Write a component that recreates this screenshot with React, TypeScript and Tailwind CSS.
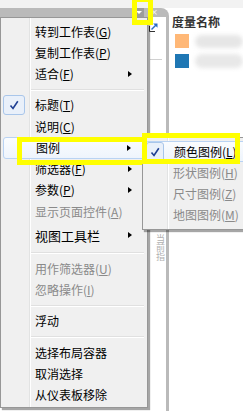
type Item = {
  label?: string;
  k?: string;
  disabled?: boolean;
  arrow?: boolean;
  checked?: boolean;
  hover?: boolean;
  big?: boolean;
  sep?: boolean;
};

const mainItems: Item[] = [
  { label: "转到工作表", k: "G" },
  { label: "复制工作表", k: "P" },
  { label: "适合", k: "F", arrow: true },
  { sep: true },
  { label: "标题", k: "T", checked: true },
  { label: "说明", k: "C" },
  { label: "图例", arrow: true, hover: true },
  { label: "筛选器", k: "F", arrow: true },
  { label: "参数", k: "P", arrow: true },
  { label: "显示页面控件", k: "A", disabled: true },
  { label: "视图工具栏", arrow: true, big: true },
  { sep: true },
  { label: "用作筛选器", k: "U", disabled: true },
  { label: "忽略操作", k: "I", disabled: true },
  { sep: true },
  { label: "浮动" },
  { sep: true },
  { label: "选择布局容器" },
  { label: "取消选择" },
  { label: "从仪表板移除" },
];

const subItems: Item[] = [
  { label: "颜色图例", k: "L", checked: true, hover: true },
  { label: "形状图例", k: "H", disabled: true },
  { label: "尺寸图例", k: "Z", disabled: true },
  { label: "地图图例", k: "M", disabled: true },
];

const Check = () => (
  <svg width="10" height="10" viewBox="0 0 10 10">
    <path d="M1.5 5.5 L4 8.5 L8.8 1.2" fill="none" stroke="#1f3f93" strokeWidth="1.6" />
  </svg>
);

const Label = ({ item }: { item: Item }) => (
  <span className={`leading-none whitespace-nowrap ${item.big ? "text-[13px]" : "text-[12px]"}`}>
    {item.label}
    {item.k && (
      <>
        (<u>{item.k}</u>)
      </>
    )}
  </span>
);

const Row = ({ item, gutter, box }: { item: Item; gutter: string; box: string }) => (
  <div
    className={`flex items-center ${item.big ? "h-[26px]" : "h-[21.25px]"} ${
      item.disabled ? "text-[#8a8a8a]" : "text-black"
    } ${item.hover ? "rounded-[3px] border border-[#b9d3f3] bg-[linear-gradient(#fafcfe,#eef4fc)]" : ""}`}
  >
    <div className={`${gutter} h-full flex items-center`}>
      {item.checked && (
        <div className={`${box} h-[20px] rounded-[3px] border border-[#a9c6ea] bg-[#e9f0fa] flex items-center justify-center`}>
          <Check />
        </div>
      )}
    </div>
    <div className="flex-1 flex items-center">
      <Label item={item} />
    </div>
    {item.arrow && (
      <div className="mr-[13px] w-0 h-0 border-y-[3.5px] border-y-transparent border-l-[4px] border-l-black" />
    )}
  </div>
);

const Sep = ({ pl }: { pl: string }) => (
  <div className={`h-[10px] flex items-center ${pl} pr-[1px]`}>
    <div className="flex-1 h-[2px] border-t border-t-[#e0e0e0] border-b border-b-white" />
  </div>
);

export default function App() {
  return (
    <div className="relative w-[243px] h-[411px] overflow-hidden bg-white font-['Noto_Sans_CJK_SC',sans-serif]">
      <div className="h-[8px] bg-[#f2f2f2]" />
      <div className="flex h-[403px]">
        <div className="w-[170px] flex flex-col">
          <div className="h-[9px] bg-[#bababa] rounded-tr-[8px] flex items-center justify-end pr-[11px] gap-[6px]">
            <div className="w-[11px] h-[9px] bg-[#9c9c9c] flex items-center justify-center">
              <div className="w-0 h-0 border-x-[3px] border-x-transparent border-t-[3px] border-t-white" />
            </div>
            <span className="text-[9px] leading-none text-[#f4f4f4] font-['DejaVu_Sans',sans-serif]">×</span>
          </div>
          <div className="flex-1 flex">
            <div className="flex-1 bg-white flex">
              <div className="w-[148px]" />
              <div className="flex-1 flex flex-col">
                <div className="mt-[5px] ml-[1px]">
                  <svg width="9" height="10" viewBox="0 0 9 10">
                    <path d="M0.5 4 V9.5 H6" fill="none" stroke="#333" strokeWidth="1" />
                    <path d="M2.5 7.5 L7.5 2.5" stroke="#2a6cc4" strokeWidth="1.4" />
                    <path d="M4.2 1.5 H8.5 V5.8 Z" fill="#2a6cc4" />
                  </svg>
                </div>
                <div className="mt-[27px] ml-[2px] mr-[4px] h-px bg-[#d0d0d0]" />
                <div className="mt-[174px] ml-[3px] text-[9px] leading-[11px] text-[#b0b0b0] [writing-mode:vertical-rl]">
                  当前指
                </div>
              </div>
            </div>
            <div className="w-[3px] bg-[#bababa]" />
          </div>
        </div>
        <div className="flex-1 pl-[3px] pt-[7px]">
          <div className="h-[14px] flex items-center text-[12px] font-bold text-[#333] leading-none">度量名称</div>
          <div className="mt-[5px] flex items-center gap-[6px] pl-[3px]">
            <div className="w-[14px] h-[14px] bg-[#ffb877]" />
            <div className="w-[48px] h-[13px] rounded-full bg-[#e6e6e6] blur-[2px]" />
          </div>
          <div className="mt-[6px] flex items-center gap-[6px] pl-[3px]">
            <div className="w-[14px] h-[14px] bg-[#1f77b4]" />
            <div className="w-[48px] h-[14px] rounded-full bg-[#e8e8e8] blur-[2px]" />
          </div>
        </div>
      </div>

      {/* context menu */}
      <div className="absolute left-0 top-[17px] w-[148px] border border-[#979797] pt-[3px] pb-[1px] px-[2px] shadow-[2px_2px_1px_rgba(0,0,0,0.35)] bg-[linear-gradient(to_right,#f0f0f0_28px,#e2e3e3_28px,#e2e3e3_29px,#ffffff_29px,#ffffff_30px,#f0f0f0_30px)]">
        {mainItems.map((it, i) =>
          it.sep ? <Sep key={i} pl="pl-[28px]" /> : <Row key={i} item={it} gutter="w-[32px]" box="w-[22px]" />
        )}
      </div>
      <div className="absolute left-[17px] top-[137px] w-[132px] h-[28px] border-[5px] border-[#ffff00]" />

      {/* submenu */}
      <div className="absolute left-[142px] top-[137px] w-[120px] border border-[#979797] pt-[3px] pb-[3px] px-[2px] shadow-[2px_2px_1px_rgba(0,0,0,0.35)] bg-[linear-gradient(to_right,#f0f0f0_24px,#e2e3e3_24px,#e2e3e3_25px,#ffffff_25px,#ffffff_26px,#f0f0f0_26px)]">
        {subItems.map((it, i) => (
          <Row key={i} item={it} gutter="w-[28px]" box="w-[18px]" />
        ))}
      </div>
      <div className="absolute left-[142px] top-[133px] w-[98px] h-[31px] border-[5px] border-[#ffff00]" />

      {/* highlight on the object's dropdown */}
      <div className="absolute left-[132px] top-[-3px] w-[21px] h-[28px] border-[5px] border-[#ffff00]" />
    </div>
  );
}
